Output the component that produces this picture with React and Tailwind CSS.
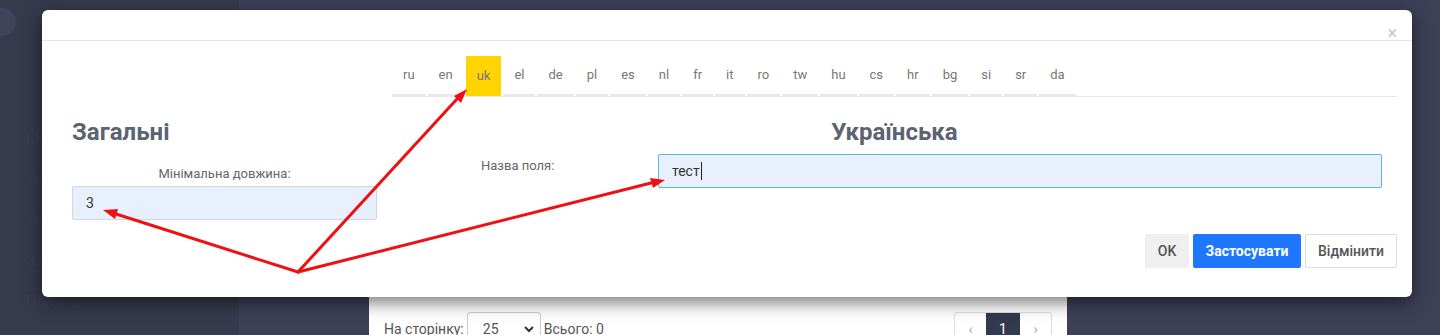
import React from 'react';

const langs = ['ru', 'en', 'uk', 'el', 'de', 'pl', 'es', 'nl', 'fr', 'it', 'ro', 'tw', 'hu', 'cs', 'hr', 'bg', 'si', 'sr', 'da'];

const Arrows = () => (
    <svg className="absolute inset-0 pointer-events-none" width="1440" height="335" viewBox="0 0 1440 335">
        <g stroke="#ee1111" strokeWidth="3" strokeLinecap="round">
            <line x1="298" y1="272" x2="116" y2="214" />
            <line x1="298" y1="272" x2="457" y2="99" />
            <line x1="298" y1="272" x2="651" y2="183" />
        </g>
        <g fill="#ee1111">
            <polygon points="103,210 118,209 115,219" />
            <polygon points="467,89 461,103 454,96" />
            <polygon points="665,180 653,188 650,178" />
        </g>
    </svg>
);

const App = () => {
    return (
        <div className="relative w-full h-[335px] overflow-hidden bg-[#3d4156]" style={{ fontFamily: 'Roboto, "Liberation Sans", sans-serif' }}>
            {/* page behind the overlay */}
            <div className="flex h-full">
                <div className="w-[240px] h-full bg-[#363a4c] border-r border-[#3f4357] relative">
                    <div className="absolute -left-[12px] top-[8px] w-[28px] h-[28px] rounded-full bg-[#40445a]"></div>
                    <div className="flex flex-col gap-[18px] pt-[128px] pl-[26px] text-[15px] text-[#3b3f52]">
                        <span>Мат</span>
                        <span>Тов</span>
                        <span>Тов</span>
                        <span>Зам</span>
                        <span>Покупці</span>
                    </div>
                </div>
                <div className="flex-1 pl-[129px] pt-[297px]">
                    <div className="w-[698px] h-[60px] bg-white flex items-start pt-[15px] pl-[15px] pr-[15px] text-[14px] text-[#555]">
                        <div className="flex items-center gap-[3px]">
                            <span>На сторінку:</span>
                            <div className="w-[74px] h-[34px] border border-[#ccc] rounded-[3px] flex items-center justify-between pl-[15px] pr-[6px]">
                                <span>25</span>
                                <svg width="10" height="10" viewBox="0 0 10 10"><path d="M1 3 L5 7 L9 3" fill="none" stroke="#333" strokeWidth="2" /></svg>
                            </div>
                            <span>Всього: 0</span>
                        </div>
                        <div className="ml-auto flex h-[34px] border border-[#ddd] rounded-[3px] text-[#aaa]">
                            <div className="w-[31px] flex items-center justify-center">‹</div>
                            <div className="w-[34px] flex items-center justify-center bg-[#343a4e] text-white">1</div>
                            <div className="w-[31px] flex items-center justify-center">›</div>
                        </div>
                    </div>
                </div>
            </div>

            {/* modal */}
            <div className="absolute left-[42px] top-[10px] w-[1370px] h-[287px] bg-white rounded-[6px] shadow-[0_5px_18px_rgba(0,0,0,0.55)]">
                <div className="h-[31px] border-b border-[#e5e5e5] relative">
                    <span className="absolute right-[15px] top-[14px] text-[18px] leading-none text-[#c8c8c8]">×</span>
                </div>
                <div className="px-[15px]">
                    <div className="flex">
                        <div className="w-[335px]"></div>
                        <div className="flex-1 pt-[15px]">
                            <div className="flex border-b border-[#e6e8ea]">
                                {langs.map((l) => (
                                    <div
                                        key={l}
                                        className={
                                            l === 'uk'
                                                ? 'h-[40px] px-[11px] mr-[2px] flex items-center text-[13px] text-[#777] bg-[#ffd400]'
                                                : 'h-[40px] px-[11px] mr-[2px] flex items-center text-[13px] text-[#777] border-b-2 border-[#e6e8ea]'
                                        }
                                    >
                                        {l}
                                    </div>
                                ))}
                            </div>
                        </div>
                    </div>
                    <div className="flex">
                        <div className="w-[335px] px-[15px]">
                            <h2 className="text-[24px] font-bold text-[#5b6470] mt-[20px] leading-[30px]">Загальні</h2>
                            <div className="mt-[19px] text-center text-[13px] text-[#666] leading-[16px]">Мінімальна довжина:</div>
                            <div className="mt-[4px] h-[34px] bg-[#e8f0fe] border border-[#d0d6de] rounded-[2px] flex items-center pl-[13px] text-[14px] text-[#333]">3</div>
                        </div>
                        <div className="flex-1 pl-[15px]">
                            <h2 className="text-[24px] font-bold text-[#5b6470] mt-[20px] leading-[30px] text-center pr-[15px]">Українська</h2>
                            <div className="flex mt-[7px] pr-[15px]">
                                <div className="w-[251px] pl-[74px] pt-[2px] text-[13px] text-[#666]">Назва поля:</div>
                                <div className="flex-1 h-[34px] bg-[#e8f0fe] border border-[#5bb9cf] rounded-[2px] flex items-center pl-[13px] text-[14px] text-[#333]">
                                    тест<span className="w-px h-[18px] bg-[#222] ml-[1px]"></span>
                                </div>
                            </div>
                            <div className="flex justify-end gap-[4px] mt-[46px]">
                                <button className="h-[34px] w-[44px] bg-[#efefef] text-[#555] text-[14px] font-medium rounded-[2px]">OK</button>
                                <button className="h-[34px] w-[108px] bg-[#1f77ff] text-white text-[14px] font-bold rounded-[2px]">Застосувати</button>
                                <button className="h-[34px] w-[92px] bg-white border border-[#dcdcdc] text-[#555] text-[14px] font-medium rounded-[2px]">Відмінити</button>
                            </div>
                        </div>
                    </div>
                </div>
            </div>

            <Arrows />
        </div>
    );
};

export default App;
